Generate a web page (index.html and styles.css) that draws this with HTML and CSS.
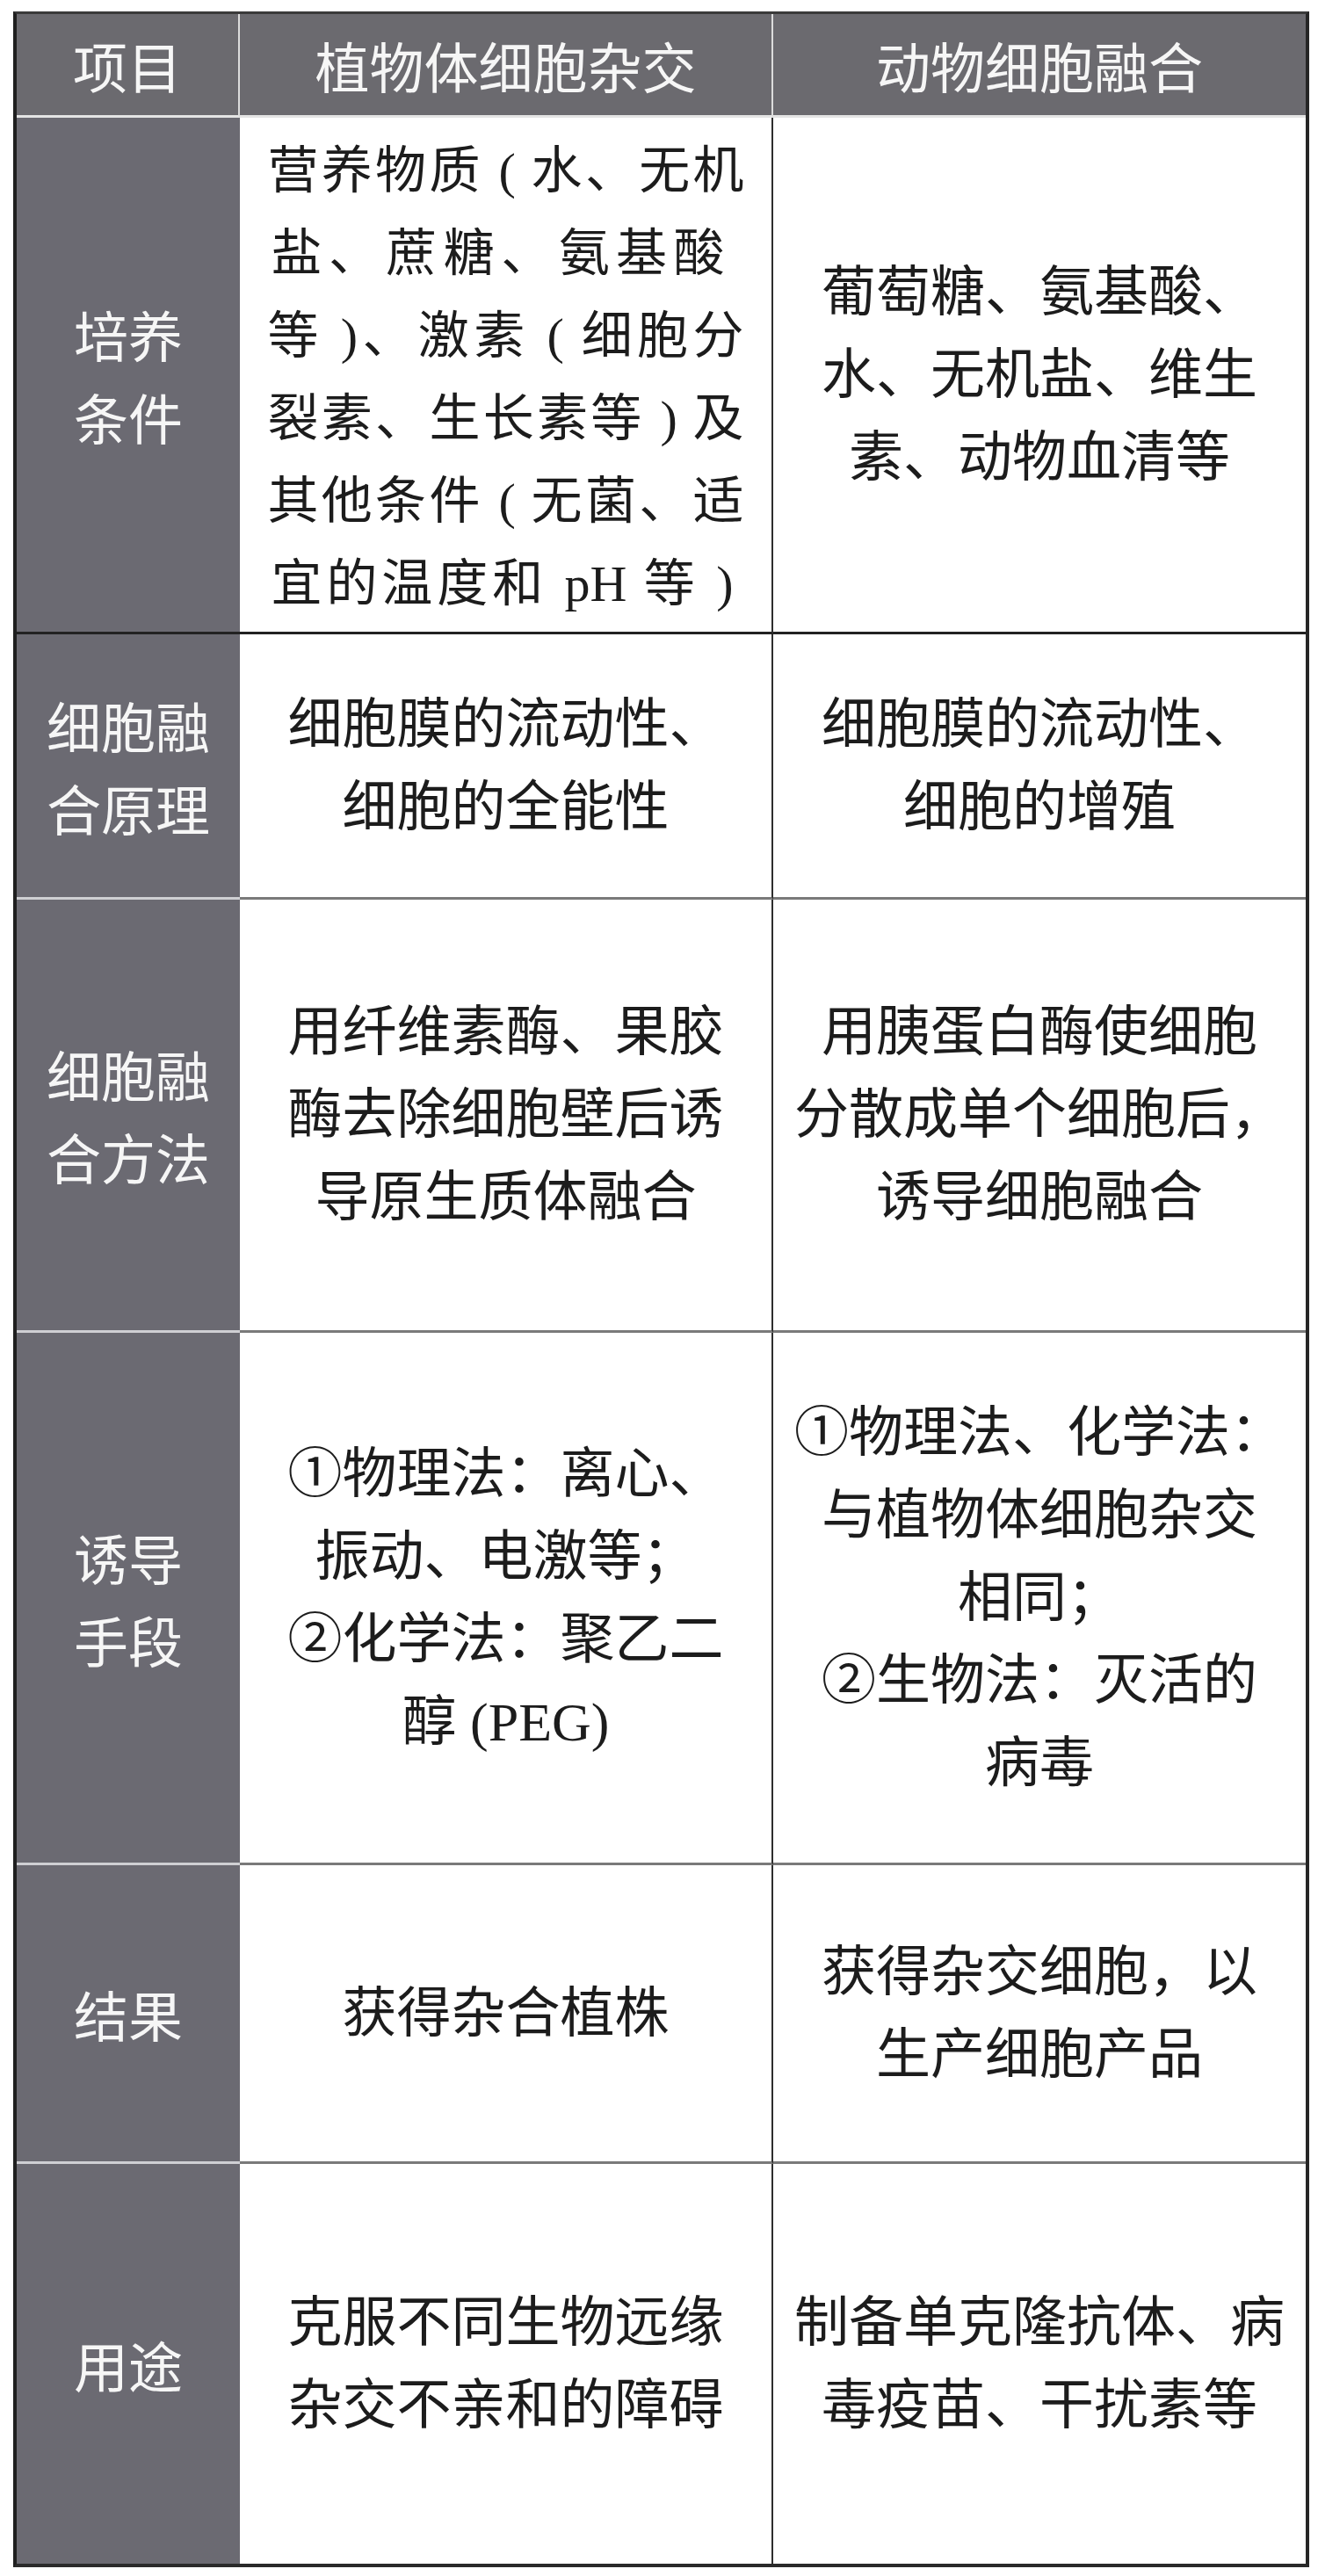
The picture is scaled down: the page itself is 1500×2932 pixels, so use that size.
FILE: index.html
```html
<!DOCTYPE html>
<html lang="zh-CN">
<head>
<meta charset="utf-8">
<title>植物体细胞杂交与动物细胞融合</title>
<link rel="stylesheet" href="styles.css">
</head>
<body>
<div class="table">
  <div class="cell head c1">项目</div>
  <div class="cell head c2">植物体细胞杂交</div>
  <div class="cell head c3">动物细胞融合</div>

  <div class="cell label r1"><div>培养<br>条件</div></div>
  <div class="cell body c2 r1">
    <div class="just">
      <span class="ln">营养物质 ( 水、无机</span>
      <span class="ln short">盐、蔗糖、氨基酸</span>
      <span class="ln">等 )、激素 ( 细胞分</span>
      <span class="ln">裂素、生长素等 ) 及</span>
      <span class="ln">其他条件 ( 无菌、适</span>
      <span class="ln last">宜的温度和 pH 等 )</span>
    </div>
  </div>
  <div class="cell body c3 r1"><div>葡萄糖、氨基酸、<br>水、无机盐、维生<br>素、动物血清等</div></div>

  <div class="cell label"><div>细胞融<br>合原理</div></div>
  <div class="cell body c2"><div>细胞膜的流动性、<br>细胞的全能性</div></div>
  <div class="cell body c3"><div>细胞膜的流动性、<br>细胞的增殖</div></div>

  <div class="cell label"><div>细胞融<br>合方法</div></div>
  <div class="cell body c2"><div>用纤维素酶、果胶<br>酶去除细胞壁后诱<br>导原生质体融合</div></div>
  <div class="cell body c3"><div>用胰蛋白酶使细胞<br>分散成单个细胞后，<br>诱导细胞融合</div></div>

  <div class="cell label"><div>诱导<br>手段</div></div>
  <div class="cell body c2"><div>①物理法：离心、<br>振动、电激等；<br>②化学法：聚乙二<br>醇 (PEG)</div></div>
  <div class="cell body c3"><div>①物理法、化学法：<br>与植物体细胞杂交<br>相同；<br>②生物法：灭活的<br>病毒</div></div>

  <div class="cell label"><div>结果</div></div>
  <div class="cell body c2"><div>获得杂合植株</div></div>
  <div class="cell body c3"><div>获得杂交细胞，以<br>生产细胞产品</div></div>

  <div class="cell label last-row"><div>用途</div></div>
  <div class="cell body c2 last-row"><div>克服不同生物远缘<br>杂交不亲和的障碍</div></div>
  <div class="cell body c3 last-row"><div>制备单克隆抗体、病<br>毒疫苗、干扰素等</div></div>
</div>
</body>
</html>
```
FILE: styles.css
```css
html, body {
  margin: 0;
  padding: 0;
  background: #ffffff;
}

.table {
  margin: 13px 0 0 15px;
  width: 1475px;
  box-sizing: border-box;
  border-left: 4px solid #1f1f1f;
  border-right: 4px solid #262626;
  border-top: 3px solid #3a3a3a;
  border-bottom: 4px solid #2a2a2a;
  display: grid;
  grid-template-columns: 254px 607px 1fr;
  grid-template-rows: 118px 588px 302px 493px 606px 340px 455px;
}

.cell {
  display: flex;
  align-items: center;
  justify-content: center;
  text-align: center;
  box-sizing: border-box;
}

.head {
  background: #6b6a6f;
  color: #f6f6f6;
  font-family: "Noto Sans CJK SC", sans-serif;
  font-size: 62px;
  line-height: 94px;
  border-bottom: 3px solid #e4e4e4;
}

.head.c1, .head.c2 {
  border-right: 2px solid #dcdcdc;
}

.label {
  background: #6b6a72;
  color: #f6f6f6;
  font-family: "Noto Sans CJK SC", sans-serif;
  font-size: 62px;
  line-height: 94px;
  border-bottom: 3px solid #cfcfd3;
}

.body {
  background: #ffffff;
  color: #1c1c1c;
  font-family: "Liberation Serif", "Noto Sans CJK SC", serif;
  font-size: 62px;
  line-height: 94px;
  border-bottom: 3px solid #7a7a7a;
}

.body.c2 {
  border-right: 2px solid #2e2e2e;
}

.r1 {
  border-bottom: 3px solid #222222;
}

.last-row {
  border-bottom: none;
}

.just {
  width: 542px;
  font-size: 58px;
  line-height: 94px;
  padding-top: 6px;
}

.ln {
  display: block;
  text-align: justify;
  text-align-last: justify;
}

.ln.short {
  width: 516px;
  margin-left: 4px;
}

.ln.last {
  width: 526px;
  margin-left: 4px;
}
```
